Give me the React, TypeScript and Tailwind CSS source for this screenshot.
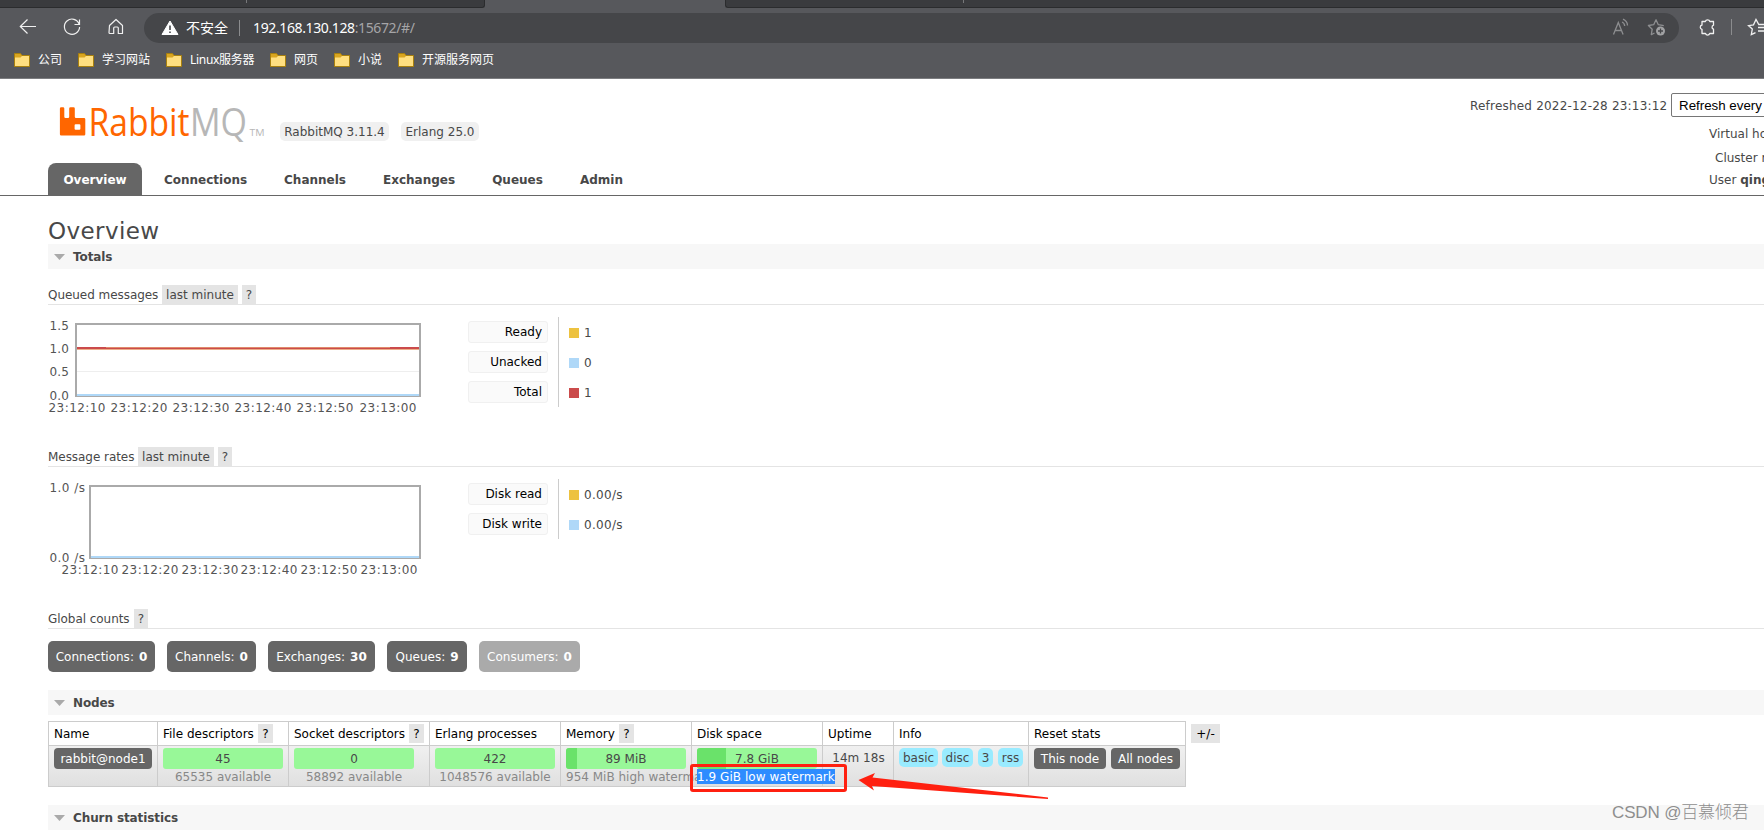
import type { ReactNode } from "react";
import clsx from "clsx";

const bookmarks = [
  { label: "公司", cls: "w-[64px]" },
  { label: "学习网站", cls: "w-[88px]" },
  { label: "Linux服务器", cls: "w-[104px] tracking-[-0.3px]" },
  { label: "网页", cls: "w-[64px]" },
  { label: "小说", cls: "w-[64px]" },
  { label: "开源服务网页", cls: "w-[110px]" },
];

const tabs = [
  { label: "Overview", cls: "w-[94px] bg-[#666] text-white" },
  { label: "Connections", cls: "ml-[7px] w-[113px]" },
  { label: "Channels", cls: "ml-[7px] w-[92px]" },
  { label: "Exchanges", cls: "ml-[7px] w-[102px]" },
  { label: "Queues", cls: "ml-[7px] w-[81px]" },
  { label: "Admin", cls: "ml-[7px] w-[73px]" },
];

const counts = [
  { label: "Connections", value: 0, cls: "w-[107px] bg-[#666]" },
  { label: "Channels", value: 0, cls: "w-[89px] bg-[#666]" },
  { label: "Exchanges", value: 30, cls: "w-[107px] bg-[#666]" },
  { label: "Queues", value: 9, cls: "w-[80px] bg-[#666]" },
  { label: "Consumers", value: 0, cls: "w-[101px] bg-[#aaa]" },
];

const columns = [
  { label: "Name", cls: "w-[109px]" },
  { label: "File descriptors", cls: "w-[131px]", help: true },
  { label: "Socket descriptors", cls: "w-[141px]", help: true },
  { label: "Erlang processes", cls: "w-[131px]" },
  { label: "Memory", cls: "w-[131px]", help: true },
  { label: "Disk space", cls: "w-[131px]" },
  { label: "Uptime", cls: "w-[71px]" },
  { label: "Info", cls: "w-[135px]" },
  { label: "Reset stats", cls: "w-[157px]" },
];

type Tick = { label: string; x: number };

function FolderIcon() {
  return (
    <svg width="16" height="14" viewBox="0 0 16 14" className="shrink-0">
      <path d="M0.5 0.5h6l1.5 2h7.5v11h-15z" fill="#d9a520" stroke="#a8800f" />
      <path d="M1 4.5h5.5l1.5-1.5h7v10H1z" fill="#ffdf80" />
    </svg>
  );
}

function BrowserChrome() {
  return (
    <div className="h-[79px] border-b border-[#7c7d80] bg-[#57585c] font-['Noto_Sans','Noto_Sans_CJK_SC',sans-serif] text-white">
      {/* Tab strip */}
      <div className="flex h-2 justify-between">
        <div className="flex w-[485px] justify-center rounded-br-[3px] border-r border-b border-[#2b2c2e] bg-[#3a3b3e]">
          <span className="ml-2 h-[3px] w-px bg-[#77787a]" />
        </div>
        <div className="flex w-[1039px] rounded-bl-[3px] border-b border-l border-[#2b2c2e] bg-[#3a3b3e]">
          <span className="ml-[237px] h-[3px] w-px bg-[#77787a]" />
        </div>
      </div>

      {/* Toolbar */}
      <div className="flex h-[38px] items-center overflow-hidden">
        <svg width="144" height="38" viewBox="0 8 144 38" fill="none" stroke="#f0f0f0" strokeWidth="1.2" className="shrink-0">
          <path d="M20.5 26.5H36M27.5 19.5l-7.2 7 7.2 7" />
          <path d="M79.2 24.2A7.6 7.6 0 1 0 79.6 27M79.5 19.5v5h-5" />
          <path d="M109.5 25.5l6.5-6 6.5 6v8h-4.2v-5.5a1 1 0 0 0-1-1h-2.6a1 1 0 0 0-1 1v5.5h-3.7a1 1 0 0 1-1-1z" strokeLinejoin="round" />
        </svg>
        <div className="mt-[1px] flex h-[30px] w-[1535px] shrink-0 items-center rounded-full bg-[#454649] pl-[17px] text-sm">
          <svg width="18" height="16" viewBox="0 0 18 16">
            <path d="M9 1L17 14.5H1z" fill="#fff" stroke="#fff" strokeLinejoin="round" />
            <path d="M9 5.5v4.5M9 11.5v1.5" stroke="#454649" strokeWidth="1.6" />
          </svg>
          <span className="ml-[7px] w-[42px]">不安全</span>
          <span className="ml-[11px] h-4 w-px bg-[#8b8c8e]" />
          <span className="ml-[13px] text-[14px] tracking-[-0.38px]">
            192.168.130.128<span className="text-[#a5a5a7]">:15672/#/</span>
          </span>
          <svg width="54" height="20" viewBox="0 0 54 20" fill="none" stroke="#8d8e90" strokeWidth="1.3" className="mr-[13px] ml-auto">
            <path d="M1.5 16.5L6.3 4.5l4.8 12M3.3 12.5h6M10 4q2.5 1 2.7 4M11 1.2q4.3 1.8 4.5 6.3" />
            <path d="M51.8 7.6l-5.5-.9L44 1.8l-2.3 4.9-5.3.8 3.8 3.7-.9 5.5 3.2-1.7" strokeLinejoin="round" />
            <circle cx="48.5" cy="13" r="4.5" fill="#a0a1a3" stroke="none" />
            <path d="M46 13h5M48.5 10.5v5" stroke="#454649" />
          </svg>
        </div>
        <svg width="85" height="38" viewBox="1679 8 85 38" fill="none" stroke="#f0f0f0" strokeWidth="1.3" className="shrink-0">
          <path d="M1702 21.5h3.3a2.4 2.4 0 0 1 4.6 0h3.6v3.7a2.1 2.1 0 0 0 0 4v4.3h-3.8a2.2 2.2 0 0 1-4.2 0h-3.5v-4.2a2.2 2.2 0 0 1 0-4.3z" strokeLinejoin="round" />
          <path d="M1731.5 19v16" stroke="#8b8c8e" strokeWidth="1" />
          <path d="M1764 24.5h-5.2l-2.8-5-2.5 5.3-5 .8 3.8 3.5-1 5.5 4.2-2M1758 27.5h8M1758 31h8" />
        </svg>
      </div>

      {/* Bookmarks */}
      <div className="flex h-7 items-center pl-[14px] text-[12px]">
        {bookmarks.map((b) => (
          <div key={b.label} className={clsx("flex items-center gap-2 whitespace-nowrap", b.cls)}>
            <FolderIcon />
            <span>{b.label}</span>
          </div>
        ))}
      </div>
    </div>
  );
}

function Logo() {
  return (
    <svg width="207" height="32" viewBox="0 0 207 32" className="shrink-0 overflow-visible font-['Open_Sans',sans-serif]">
      <path
        d="M2.2 0.3H4Q5.300 0.300 5.300 1.600V9.800Q5.300 11 6.500 11H9Q10.200 11 10.200 9.800V1.600Q10.200 0.300 11.500 0.300H14.500Q15.800 0.300 15.800 1.600V9.800Q15.800 11 17 11H25Q26.300 11 26.300 12.300V27.200Q26.300 28.600 25 28.600H2.200Q0.900 28.600 0.900 27.200V1.600Q0.900 0.300 2.200 0.300zM16.600 17.300Q15.600 17.300 15.600 18.300V21.800Q15.600 22.800 16.600 22.800H20.400Q21.400 22.800 21.400 21.800V18.300Q21.400 17.300 20.400 17.300z"
        fill="#f60"
        fillRule="evenodd"
      />
      <text x="29.5" y="28.5" fontSize="38.5" fill="#f60" textLength="101" lengthAdjust="spacingAndGlyphs">Rabbit</text>
      <text x="131" y="28.5" fontSize="38.5" fill="#b7b7b7" textLength="57" lengthAdjust="spacingAndGlyphs">MQ</text>
      <text x="190.500" y="28.500" fontSize="9.500" fill="#b7b7b7" textLength="15" lengthAdjust="spacingAndGlyphs">TM</text>
    </svg>
  );
}

function Tag({ children, className }: { children: ReactNode; className?: string }) {
  return <span className={clsx("flex h-[19px] items-center justify-center bg-[#e4e4e4]", className)}>{children}</span>;
}

function SectionBar({ title }: { title: string }) {
  return (
    <h2 className="flex h-[25px] items-center bg-[#f7f7f7] pl-[6px] font-bold">
      <svg width="11" height="6" className="mt-px mr-2">
        <path d="M0 0h11L5.5 6z" fill="#aaa" />
      </svg>
      <span className="tracking-[-0.1px]">{title}</span>
    </h2>
  );
}

function SubHeading({ title, titleClass, range }: { title: string; titleClass: string; range?: boolean }) {
  return (
    <h3 className="flex h-5 items-center border-b border-[#e4e4e4]">
      <span className={clsx("tracking-[-0.05px] whitespace-nowrap", titleClass)}>{title}</span>
      {range && <Tag className="mr-1 w-[76px]">last minute</Tag>}
      <Tag className="w-[14px]">?</Tag>
    </h3>
  );
}

type ChartProps = {
  left: number;
  yTicks: { label: string; y: number; width: number }[];
  xTicks: Tick[];
  queued?: boolean;
};

function Chart({ left, yTicks, xTicks, queued }: ChartProps) {
  return (
    <svg width="380" height="98" viewBox="48 317 380 98" fontSize="12" fill="#545454" className="shrink-0">
      <rect x={left + 1} y="324" width={419 - left} height="72" fill="#fff" stroke="#aaa" strokeWidth="2" />
      {queued && (
        <>
          <path d="M77 371.5H419" stroke="#eee" />
          <path d="M77 348.5H419" stroke="#edaf8a" strokeWidth="3" />
          <path d="M77 348H419" stroke="#cb4b4b" strokeWidth="2" />
          <path d="M106 347.5H390" stroke="#e08a6a" strokeWidth="1" />
        </>
      )}
      <path d={`M${left + 2} 395H419`} stroke="#afd8f8" strokeWidth="2" />
      {yTicks.map((t) => (
        <text key={t.label} x="49.5" y={t.y} textLength={t.width}>{t.label}</text>
      ))}
      {xTicks.map((t) => (
        <text key={t.label} x={t.x - 0.5} y="412" textLength="57">{t.label}</text>
      ))}
    </svg>
  );
}

function Legend({ items }: { items: { label: string; value: string; color: string }[] }) {
  return (
    <div className="flex">
      <div className="flex w-[131px] flex-col items-start gap-2 border-r border-[#ccc] pt-1 pl-10">
        {items.map((i) => (
          <div key={i.label} className="flex h-[22px] w-20 items-center justify-end rounded-[3px] border border-[#f0f0f0] bg-[#fafafa] pr-[5px] pb-px text-black">
            {i.label}
          </div>
        ))}
      </div>
      <div className="flex flex-col pl-[10px]">
        {items.map((i) => (
          <div key={i.label} className="flex h-[30px] items-center gap-[5px] pt-[2px]">
            <span className={clsx("size-[10px]", i.color)} />
            <span className="tracking-[0.3px]">{i.value}</span>
          </div>
        ))}
      </div>
    </div>
  );
}

function Bar({ value, note, used }: { value: string; note: ReactNode; used?: string }) {
  return (
    <div className="w-[120px]">
      <div className="flex h-[21px] overflow-hidden rounded-[3px] bg-[#98f898]">
        {used && <div className={clsx("shrink-0 bg-[#6ae26a]", used)} />}
        <div className={clsx("w-[120px] shrink-0 text-center leading-[22px]", used === "w-[11px]" && "-ml-[11px]", used === "w-[29px]" && "-ml-[29px]")}>{value}</div>
      </div>
      <div className="flex h-[15px] justify-center leading-[16px] whitespace-nowrap text-[#888]">{note}</div>
    </div>
  );
}

function Cell({ children, className }: { children: ReactNode; className: string }) {
  return <div className={clsx("flex h-10 shrink-0 items-start border-r border-[#ccc] pt-[2px] pl-[5px]", className)}>{children}</div>;
}

function DarkButton({ children, className }: { children: ReactNode; className: string }) {
  return <span className={clsx("flex h-[21px] items-center justify-center rounded-[4px] bg-[#666] whitespace-nowrap text-white", className)}>{children}</span>;
}

function NodesTable() {
  return (
    <div className="flex">
      <div className="relative w-[1138px] border border-r-0 border-[#ccc]">
        <div className="flex h-6 border-b border-[#ccc] text-black">
          {columns.map((c) => (
            <div key={c.label} className={clsx("flex shrink-0 items-center gap-1 border-r border-[#ccc] pl-[5px] whitespace-nowrap", c.cls)}>
              <span>{c.label}</span>
              {c.help && <Tag className="w-[15px]">?</Tag>}
            </div>
          ))}
        </div>
        <div className="flex h-10 bg-linear-to-b from-[#f0f0f0] to-[#e0e0e0]">
          <Cell className="w-[109px]">
            <DarkButton className="w-[98px]">rabbit@node1</DarkButton>
          </Cell>
          <Cell className="w-[131px]"><Bar value="45" note="65535 available" /></Cell>
          <Cell className="w-[141px]"><Bar value="0" note="58892 available" /></Cell>
          <Cell className="w-[131px]"><Bar value="422" note="1048576 available" /></Cell>
          <Cell className="w-[131px]">
            <Bar value="89 MiB" used="w-[11px]" note={<span className="w-full">954 MiB high watermark</span>} />
          </Cell>
          <Cell className="w-[131px]">
            <Bar
              value="7.8 GiB"
              used="w-[29px]"
              note={
                <span className="relative w-full">
                  <span className="inline-block h-[15px] w-[138px] bg-[#2d8cff] tracking-[0.05px] text-white">1.9 GiB low watermark</span>
                </span>
              }
            />
          </Cell>
          <Cell className="w-[71px]">
            <span className="w-[61px] pt-px text-center leading-[18px] whitespace-nowrap">14m 18s</span>
          </Cell>
          <Cell className="w-[135px] gap-1">
            <span className="h-[19px] w-[39px] rounded-[5px] bg-[#99ebff] text-center leading-[20px]">basic</span>
            <span className="h-[19px] w-[31px] rounded-[5px] bg-[#99ebff] text-center leading-[20px]">disc</span>
            <span className="ml-px h-[19px] w-[15px] rounded-[5px] bg-[#99ebff] text-center leading-[20px]">3</span>
            <span className="ml-px h-[19px] w-[25px] rounded-[5px] bg-[#99ebff] text-center leading-[20px]">rss</span>
          </Cell>
          <Cell className="w-[157px] gap-[5px]">
            <DarkButton className="w-[72px]">This node</DarkButton>
            <DarkButton className="w-[69px]">All nodes</DarkButton>
          </Cell>
        </div>
        {/* Callout over the disk watermark */}
        <svg width="362" height="40" viewBox="688 762 362 40" className="absolute top-[40px] left-[639px]">
          <rect x="691.5" y="765.5" width="154" height="25" rx="1.5" fill="none" stroke="#ff2010" strokeWidth="3" />
          <path d="M858.5 780L875 773l-2.5 4.5L1048 797.5v1.5L872 786l2 4.5z" fill="#ff2010" />
        </svg>
      </div>
      <Tag className="mt-[3px] ml-[5px] w-[29px] text-black">+/-</Tag>
    </div>
  );
}

export default function App() {
  return (
    <div className="relative h-[830px] w-[1764px] overflow-hidden bg-white">
      <BrowserChrome />
      <div className="font-['DejaVu_Sans',sans-serif] text-[12px] leading-[18px] text-[#484848]">
        {/* Header */}
        <header className="flex h-[117px] flex-col justify-between border-b border-[#666]">
          <div className="flex h-[84px] justify-between">
            <div className="flex items-start pt-[28px] pl-[59px]">
              <Logo />
              <span className="mt-[15px] ml-[14px] h-[19px] w-[109px] rounded-[5px] bg-[#f0f0f0] text-center leading-5">RabbitMQ 3.11.4</span>
              <span className="mt-[15px] ml-3 h-[19px] w-[78px] rounded-[5px] bg-[#f0f0f0] text-center leading-5">Erlang 25.0</span>
            </div>
            <div className="w-[294px] whitespace-nowrap">
              <div className="flex h-[38px] items-end">
                <span className="mb-[2px] w-[201px] shrink-0 tracking-[0.2px]">Refreshed 2022-12-28 23:13:12</span>
                <div className="h-6 w-[300px] shrink-0 rounded-[2px] border border-[#767676] pl-[7px] font-['Liberation_Sans',sans-serif] text-[13.333px] leading-[23px] text-black">
                  Refresh every 5 seconds
                </div>
              </div>
              <div className="pt-2 pl-[239px]">Virtual host</div>
              <div className="pt-[6px] pl-[245px]">Cluster rabbit@node1</div>
              <div className="pt-1 pl-[239px]">User <b>qingjun</b></div>
            </div>
          </div>
          <nav className="flex h-8 pl-12 font-bold">
            {tabs.map((t) => (
              <a key={t.label} className={clsx("rounded-t-[8px] pt-2 text-center", t.cls)}>{t.label}</a>
            ))}
          </nav>
        </header>

        <main className="pl-12">
          <h1 className="h-12 pt-[21px] text-[23px] leading-[28px] tracking-[0.4px]">Overview</h1>
          <SectionBar title="Totals" />

          <div className="h-4" />
          <SubHeading title="Queued messages" titleClass="w-[114px]" range />
          <div className="flex h-[142px] items-start pt-3">
            <Chart
              left={75}
              queued
              yTicks={[
                { label: "1.5", y: 330, width: 19.5 },
                { label: "1.0", y: 353, width: 19.5 },
                { label: "0.5", y: 376, width: 19.5 },
                { label: "0.0", y: 400, width: 19.5 },
              ]}
              xTicks={[
                { label: "23:12:10", x: 49 },
                { label: "23:12:20", x: 111 },
                { label: "23:12:30", x: 173 },
                { label: "23:12:40", x: 235 },
                { label: "23:12:50", x: 297 },
                { label: "23:13:00", x: 360 },
              ]}
            />
            <Legend
              items={[
                { label: "Ready", value: "1", color: "bg-[#edc240]" },
                { label: "Unacked", value: "0", color: "bg-[#afd8f8]" },
                { label: "Total", value: "1", color: "bg-[#cb4b4b]" },
              ]}
            />
          </div>

          <SubHeading title="Message rates" titleClass="w-[90px]" range />
          <div className="flex h-[142px] items-start pt-3">
            <Chart
              left={89}
              yTicks={[
                { label: "1.0 /s", y: 330, width: 35.5 },
                { label: "0.0 /s", y: 400, width: 35.5 },
              ]}
              xTicks={[
                { label: "23:12:10", x: 62 },
                { label: "23:12:20", x: 122 },
                { label: "23:12:30", x: 182 },
                { label: "23:12:40", x: 241 },
                { label: "23:12:50", x: 301 },
                { label: "23:13:00", x: 361 },
              ]}
            />
            <Legend
              items={[
                { label: "Disk read", value: "0.00/s", color: "bg-[#edc240]" },
                { label: "Disk write", value: "0.00/s", color: "bg-[#afd8f8]" },
              ]}
            />
          </div>

          <SubHeading title="Global counts" titleClass="w-[86px]" />
          <div className="mt-3 mb-[18px] flex gap-3">
            {counts.map((c) => (
              <div key={c.label} className={clsx("flex h-[31px] items-center justify-center gap-[5px] rounded-[5px] whitespace-nowrap text-white", c.cls)}>
                {c.label}: <b>{c.value}</b>
              </div>
            ))}
          </div>

          <SectionBar title="Nodes" />
          <div className="h-[6px]" />
          <NodesTable />
          <div className="h-[18px]" />
          <SectionBar title="Churn statistics" />
        </main>
      </div>

      {/* Author watermark */}
      <div className="absolute top-[801px] left-[1612px] font-['Liberation_Sans','Noto_Sans_CJK_SC',sans-serif] text-[17px] leading-6 font-light tracking-[-0.15px] whitespace-nowrap text-[#8e8e8e]">
        CSDN @百慕倾君
      </div>
    </div>
  );
}
